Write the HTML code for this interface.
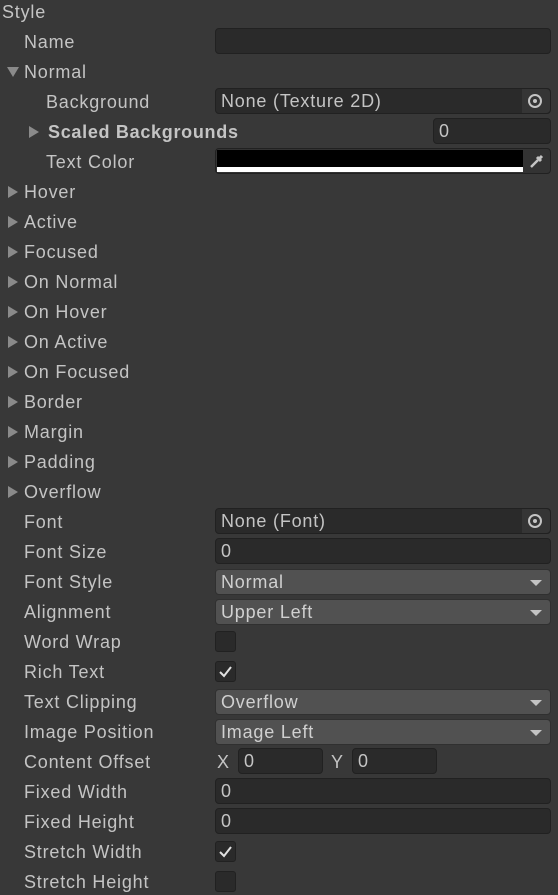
<!DOCTYPE html>
<html><head><meta charset="utf-8"><style>
*{margin:0;padding:0;box-sizing:border-box}
body{width:558px;height:895px;background:#383838;font-family:"Liberation Sans",sans-serif;font-size:18px;letter-spacing:0.8px;color:#c4c4c4;position:relative;overflow:hidden}
.l{position:absolute;white-space:nowrap;line-height:22px;margin-top:0px}
.f{position:absolute;height:26px;background:#2a2a2a;border:1px solid #212121;border-radius:4px;color:#c4c4c4;padding-left:5px;line-height:25px;white-space:nowrap}
.d{position:absolute;left:215px;width:336px;height:26px;background:#515151;border:1px solid #303030;border-radius:4px;padding-left:5px;line-height:25px;color:#d0d0d0}
.d:after{content:"";position:absolute;right:8px;top:10px;border-left:6px solid transparent;border-right:6px solid transparent;border-top:6px solid #c4c4c4}
.tri{position:absolute;width:0;height:0}
.r{border-top:6px solid transparent;border-bottom:6px solid transparent;border-left:10px solid #8a8a8a}
.dn{border-left:6px solid transparent;border-right:6px solid transparent;border-top:10px solid #8a8a8a}
.cb{position:absolute;left:215px;width:21px;height:21px;background:#2a2a2a;border:1px solid #212121;border-radius:3px}
.obj{position:absolute;right:0;top:0;width:28px;height:24px;background:#353535;border-radius:0 4px 4px 0}
.obj:after{content:"";position:absolute;border:2px solid #c4c4c4;border-radius:50%;box-sizing:content-box;width:10px;height:10px;left:6px;top:5px}
.obj:before{content:"";position:absolute;left:11px;top:10px;width:4px;height:4px;background:#c4c4c4;border-radius:50%;z-index:1}
</style></head><body>
<div class="l" style="left:2px;top:1px">Style</div>
<div class="l" style="left:24px;top:31px">Name</div>
<div class="f" style="left:215px;top:28px;width:336px"></div>
<div class="tri dn" style="left:7px;top:67px"></div>
<div class="l" style="left:24px;top:61px">Normal</div>
<div class="l" style="left:46px;top:91px">Background</div>
<div class="f" style="left:215px;top:88px;width:336px">None (Texture 2D)<div class="obj"></div></div>
<div class="tri r" style="left:29px;top:126px"></div>
<div class="l" style="left:48px;top:121px;font-weight:bold;letter-spacing:0.7px">Scaled Backgrounds</div>
<div class="f" style="left:433px;top:118px;width:118px">0</div>
<div class="l" style="left:46px;top:151px">Text Color</div>
<div class="f" style="left:215px;top:148px;width:336px;padding:0;background:#333">
<div style="position:absolute;left:1px;top:1px;width:306px;height:17px;background:#000"></div>
<div style="position:absolute;left:1px;top:18px;width:306px;height:5px;background:#fff"></div>
<svg style="position:absolute;right:5px;top:4px" width="16" height="16" viewBox="0 0 16 16"><path d="M2 14 L9 7" stroke="#c4c4c4" stroke-width="2.5"/><path d="M8 4 L12 8 M10 6 L13 3" stroke="#c4c4c4" stroke-width="3"/></svg>
</div>

<div class="tri r" style="left:8px;top:186px"></div><div class="l" style="left:24px;top:181px">Hover</div>
<div class="tri r" style="left:8px;top:216px"></div><div class="l" style="left:24px;top:211px">Active</div>
<div class="tri r" style="left:8px;top:246px"></div><div class="l" style="left:24px;top:241px">Focused</div>
<div class="tri r" style="left:8px;top:276px"></div><div class="l" style="left:24px;top:271px">On Normal</div>
<div class="tri r" style="left:8px;top:306px"></div><div class="l" style="left:24px;top:301px">On Hover</div>
<div class="tri r" style="left:8px;top:336px"></div><div class="l" style="left:24px;top:331px">On Active</div>
<div class="tri r" style="left:8px;top:366px"></div><div class="l" style="left:24px;top:361px">On Focused</div>
<div class="tri r" style="left:8px;top:396px"></div><div class="l" style="left:24px;top:391px">Border</div>
<div class="tri r" style="left:8px;top:426px"></div><div class="l" style="left:24px;top:421px">Margin</div>
<div class="tri r" style="left:8px;top:456px"></div><div class="l" style="left:24px;top:451px">Padding</div>
<div class="tri r" style="left:8px;top:486px"></div><div class="l" style="left:24px;top:481px">Overflow</div>

<div class="l" style="left:24px;top:511px">Font</div>
<div class="f" style="left:215px;top:508px;width:336px">None (Font)<div class="obj"></div></div>
<div class="l" style="left:24px;top:541px">Font Size</div>
<div class="f" style="left:215px;top:538px;width:336px">0</div>
<div class="l" style="left:24px;top:571px">Font Style</div>
<div class="d" style="top:569px">Normal</div>
<div class="l" style="left:24px;top:601px">Alignment</div>
<div class="d" style="top:599px">Upper Left</div>
<div class="l" style="left:24px;top:631px">Word Wrap</div>
<div class="cb" style="top:631px"></div>
<div class="l" style="left:24px;top:661px">Rich Text</div>
<div class="cb" style="top:661px"><svg width="19" height="19" viewBox="0 0 19 19"><path d="M4 10 L8 14 L15 5" stroke="#e0e0e0" stroke-width="2" fill="none"/></svg></div>
<div class="l" style="left:24px;top:691px">Text Clipping</div>
<div class="d" style="top:689px">Overflow</div>
<div class="l" style="left:24px;top:721px">Image Position</div>
<div class="d" style="top:719px">Image Left</div>
<div class="l" style="left:24px;top:751px">Content Offset</div>
<div class="l" style="left:217px;top:751px">X</div>
<div class="f" style="left:238px;top:748px;width:85px">0</div>
<div class="l" style="left:331px;top:751px">Y</div>
<div class="f" style="left:352px;top:748px;width:85px">0</div>
<div class="l" style="left:24px;top:781px">Fixed Width</div>
<div class="f" style="left:215px;top:778px;width:336px">0</div>
<div class="l" style="left:24px;top:811px">Fixed Height</div>
<div class="f" style="left:215px;top:808px;width:336px">0</div>
<div class="l" style="left:24px;top:841px">Stretch Width</div>
<div class="cb" style="top:841px"><svg width="19" height="19" viewBox="0 0 19 19"><path d="M4 10 L8 14 L15 5" stroke="#e0e0e0" stroke-width="2" fill="none"/></svg></div>
<div class="l" style="left:24px;top:871px">Stretch Height</div>
<div class="cb" style="top:871px"></div>
</body></html>
